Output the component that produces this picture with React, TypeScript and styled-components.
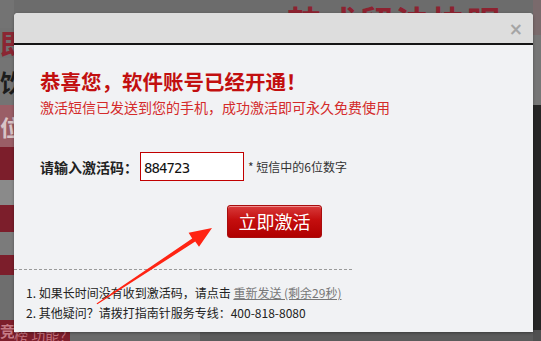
import React from 'react';
import styled, { createGlobalStyle } from 'styled-components';

const GlobalStyle = createGlobalStyle`
  html, body {
    margin: 0;
    padding: 0;
    width: 541px;
    height: 341px;
    overflow: hidden;
    background: #6f6f6f;
  }
  * {
    box-sizing: border-box;
  }
`;

const CJK = `"Noto Sans CJK SC", "Microsoft YaHei", sans-serif`;

// Page behind the overlay
const Screen = styled.div`
  position: relative;
  width: 541px;
  height: 341px;
  overflow: hidden;
  font-family: ${CJK};
`;

const Page = styled.div`
  display: flex;
  width: 100%;
  height: 100%;
`;

const LeftStrip = styled.div`
  width: 14px;
  display: flex;
  flex-direction: column;
`;

const Band = styled.div<{ $h: number; $bg: string; $fg?: string; $size?: number }>`
  height: ${(p) => p.$h}px;
  background: ${(p) => p.$bg};
  color: ${(p) => p.$fg || 'transparent'};
  font-size: ${(p) => p.$size || 20}px;
  font-weight: 700;
  line-height: ${(p) => p.$h}px;
  overflow: hidden;
  white-space: nowrap;
`;

const Middle = styled.div`
  flex: 1;
  display: flex;
  flex-direction: column;
  background: #6c6c6c;
`;

const TopBanner = styled.div`
  height: 13px;
  display: flex;
  justify-content: flex-end;
  padding-right: 30px;
  overflow: hidden;
  color: #8d2230;
  font-size: 34px;
  font-weight: 700;
  line-height: 44px;
  white-space: nowrap;
  letter-spacing: 2px;
`;

const MiddleFill = styled.div`
  flex: 1;
`;

const BottomBar = styled.div`
  height: 9px;
  display: flex;
  overflow: hidden;
`;

const BottomPart = styled.div<{ $w?: number; $bg: string }>`
  ${(p) => (p.$w ? `width: ${p.$w}px;` : 'flex: 1;')}
  background: ${(p) => p.$bg};
  color: #c0707c;
  font-size: 14px;
  line-height: 6px;
  white-space: nowrap;
  overflow: hidden;
`;

const RightStrip = styled.div`
  width: 8px;
  display: flex;
  flex-direction: column;
`;

// Modal
const Dialog = styled.div`
  position: absolute;
  left: 14px;
  top: 13px;
  width: 519px;
  height: 319px;
  background: #f1f2f4;
  border-radius: 4px 4px 0 0;
  box-shadow: 0 1px 3px rgba(0, 0, 0, 0.35);
  display: flex;
  flex-direction: column;
  font-family: ${CJK};
`;

const Header = styled.div`
  height: 32px;
  flex-shrink: 0;
  background: #dddddd;
  border-bottom: 2px solid #151515;
  border-radius: 4px 4px 0 0;
  display: flex;
  justify-content: flex-end;
  align-items: center;
  padding-right: 10px;
`;

const Close = styled.span`
  color: #a5a5a5;
  font-family: "DejaVu Sans", sans-serif;
  font-size: 17px;
  font-weight: 700;
  line-height: 1;
  margin-top: 2px;
`;

const Body = styled.div`
  display: flex;
  flex-direction: column;
`;

const Intro = styled.div`
  padding: 24px 0 0 26px;
  display: flex;
  flex-direction: column;
  gap: 5px;
`;

const Title = styled.h1`
  margin: 0;
  color: #c20f0f;
  font-size: 20.5px;
  font-weight: 700;
  line-height: 24px;
`;

const Subtitle = styled.p`
  margin: 0;
  color: #d42a2a;
  font-size: 14px;
  line-height: 18px;
`;

const FormRow = styled.div`
  margin-top: 36px;
  padding-left: 26px;
  display: flex;
  align-items: center;
`;

const Label = styled.span`
  color: #222;
  font-size: 14px;
  font-weight: 700;
  line-height: 18px;
  width: 100px;
`;

const CodeInput = styled.input`
  width: 104px;
  height: 29px;
  border: 1px solid #c10000;
  background: #fff;
  padding: 2px 3px 0;
  font-family: "DejaVu Sans Mono", monospace;
  font-size: 14px;
  color: #111;
  outline: none;
  letter-spacing: -0.9px;
`;

const Hint = styled.span`
  margin-left: 4px;
  color: #333;
  font-size: 12px;
  line-height: 18px;
`;

const ButtonRow = styled.div`
  margin-top: 24px;
  display: flex;
  justify-content: center;
  padding-left: 2px;
`;

const ActivateButton = styled.button`
  width: 95px;
  height: 33px;
  border: 1px solid #a80d0d;
  border-radius: 3px;
  background: linear-gradient(#d83a3a 0%, #c40e0e 45%, #b00000 100%);
  box-shadow: inset 0 1px 0 rgba(255, 200, 200, 0.6);
  color: #fff;
  font-family: ${CJK};
  font-size: 18px;
  line-height: 31px;
  padding: 0;
`;

const Divider = styled.div`
  margin-top: 31px;
  width: 338px;
  border-top: 1px dashed #9a9a9a;
`;

const Notes = styled.ol`
  margin: 13px 0 0 0;
  padding: 0 0 0 12px;
  list-style: none;
  color: #222;
  font-size: 12px;
  line-height: 20px;
`;

const Note = styled.li`
  white-space: nowrap;
`;

const Resend = styled.a`
  color: #777;
  text-decoration: underline;
  cursor: pointer;
`;

const ArrowLayer = styled.svg`
  position: absolute;
  left: 0;
  top: 0;
  pointer-events: none;
`;

const leftBands: Array<[number, string, string?, number?, string?]> = [
  [28, '#737373'],
  [30, '#717171', '#8b2633', 28, '即'],
  [47, '#747474', '#1c1c1c', 24, '饮'],
  [42, '#9a5e66', '#d8c4c6', 22, '位'],
  [33, '#7c1e2b'],
  [25, '#8a8a8a'],
  [27, '#7c1e2b'],
  [23, '#7b7b7b'],
  [20, '#7c1e2b'],
  [45, '#6e6e6e'],
  [21, '#7c1e2b', '#c57a85', 15, '竞'],
];

const rightBands: Array<[number, string]> = [
  [35, '#7a6a6c'],
  [70, '#767676'],
  [225, '#252525'],
  [11, '#505050'],
];

export default function App() {
  return (
    <>
      <GlobalStyle />
      <Screen>
        <Page>
          <LeftStrip>
            {leftBands.map(([h, bg, fg, size, text], i) => (
              <Band key={i} $h={h} $bg={bg} $fg={fg} $size={size}>
                {text}
              </Band>
            ))}
          </LeftStrip>
          <Middle>
            <TopBanner>韩式留法快眼</TopBanner>
            <MiddleFill />
            <BottomBar>
              <BottomPart $w={56} $bg="#7c1e2b">榜 功能？</BottomPart>
              <BottomPart $w={130} $bg="#6a6a6a" />
              <BottomPart $bg="#5b5b5b" />
            </BottomBar>
          </Middle>
          <RightStrip>
            {rightBands.map(([h, bg], i) => (
              <Band key={i} $h={h} $bg={bg} />
            ))}
          </RightStrip>
        </Page>

        <Dialog>
          <Header>
            <Close>×</Close>
          </Header>
          <Body>
            <Intro>
              <Title>恭喜您，软件账号已经开通！</Title>
              <Subtitle>激活短信已发送到您的手机，成功激活即可永久免费使用</Subtitle>
            </Intro>
            <FormRow>
              <Label>请输入激活码：</Label>
              <CodeInput defaultValue="884723" />
              <Hint>* 短信中的6位数字</Hint>
            </FormRow>
            <ButtonRow>
              <ActivateButton>立即激活</ActivateButton>
            </ButtonRow>
            <Divider />
            <Notes>
              <Note>
                1. 如果长时间没有收到激活码，请点击 <Resend>重新发送 (剩余29秒)</Resend>
              </Note>
              <Note>2. 其他疑问？请拨打指南针服务专线：400-818-8080</Note>
            </Notes>
          </Body>
        </Dialog>

        <ArrowLayer width="541" height="341" viewBox="0 0 541 341">
          <polygon
            fill="#ff2413"
            points="96.5,303.5 192.2,238.6 188.6,232.8 212,228 199,246.8 195.2,241.6 97.4,304.3"
          />
        </ArrowLayer>
      </Screen>
    </>
  );
}
